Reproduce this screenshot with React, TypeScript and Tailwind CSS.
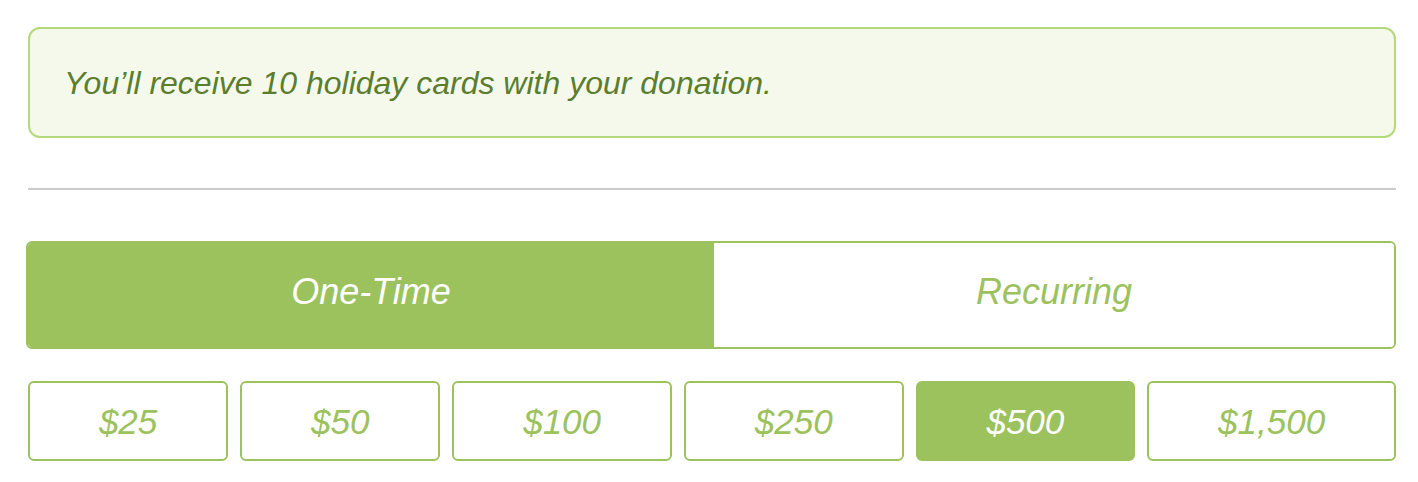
import { useState } from "react";

const amounts = ["$25", "$50", "$100", "$250", "$500", "$1,500"];

export default function App() {
  const [mode, setMode] = useState("one-time");
  const [amount, setAmount] = useState("$500");

  return (
    <div className="bg-white w-[1418px] h-[482px] pl-[28px] pr-[22px] pt-[27px] font-['Liberation_Sans',Arial,sans-serif] italic">
      {/* notice */}
      <div className="h-[111px] rounded-[12px] border-2 border-[#b4d97a] bg-[#f5f9ec] flex items-center pl-[34px] text-[32px] text-[#5b7e2e] leading-none">
        You’ll receive 10 holiday cards with your donation.
      </div>

      <div className="mt-[50px] h-[2px] bg-[#cccccc]" />

      {/* frequency toggle */}
      <div className="mt-[51px] -ml-[2px] h-[108px] flex rounded-[6px] border-2 border-[#9bc25c] overflow-hidden">
        <button
          onClick={() => setMode("one-time")}
          className={
            "w-[686px] flex items-center justify-center pb-[6px] text-[36px] leading-none italic " +
            (mode === "one-time" ? "bg-[#9bc25c] text-white" : "bg-white text-[#9bc25c]")
          }
        >
          One-Time
        </button>
        <button
          onClick={() => setMode("recurring")}
          className={
            "flex-1 flex items-center justify-center pb-[6px] text-[36px] leading-none italic " +
            (mode === "recurring" ? "bg-[#9bc25c] text-white" : "bg-white text-[#9bc25c]")
          }
        >
          Recurring
        </button>
      </div>

      {/* amounts */}
      <div className="mt-[32px] flex gap-[12px]">
        {amounts.map((a) => (
          <button
            key={a}
            onClick={() => setAmount(a)}
            className={
              "flex-auto h-[80px] rounded-[6px] border-2 border-[#9bc25c] flex items-center justify-center text-[35px] leading-none italic px-4 " +
              (amount === a ? "bg-[#9bc25c] text-white" : "bg-white text-[#9bc25c]")
            }
          >
            {a}
          </button>
        ))}
      </div>
    </div>
  );
}
